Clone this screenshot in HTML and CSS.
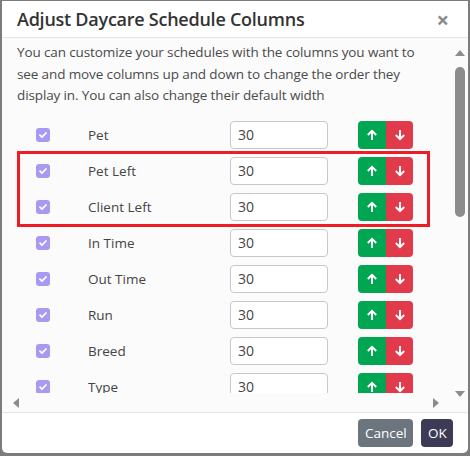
FILE: index.html
```html
<!DOCTYPE html>
<html lang="en">
<head>
    <meta charset="UTF-8">
    <meta name="viewport" content="width=device-width, initial-scale=1.0">
    <title>Adjust Daycare Schedule Columns</title>
    <link rel="stylesheet" href="styles.css">
</head>
<body>
    <div class="modal">
        <div class="modal-header">
            <h1>Adjust Daycare Schedule Columns</h1>
            <span class="close">&times;</span>
        </div>

        <div class="modal-body">
            <div class="scroll-area">
                <p class="intro">You can customize your schedules with the columns you want to see and move columns up and down to change the order they display in. You can also change their default width</p>

                <div class="col-list">
                    <div class="col-row">
                        <span class="check"><svg width="14" height="14" viewBox="0 0 14 14"><path d="M4 7.2l2 2 4-4.2" fill="none" stroke="#fff" stroke-width="1.8" stroke-linecap="round" stroke-linejoin="round"/></svg></span>
                        <span class="col-name">Pet</span>
                        <input type="text" class="col-width" value="30">
                        <div class="move-group">
                            <button class="move-up"><svg width="12" height="12" viewBox="0 0 12 12"><path d="M6 11V1.8M1.8 6L6 1.8 10.2 6" fill="none" stroke="#fff" stroke-width="2"/></svg></button>
                            <button class="move-down"><svg width="12" height="12" viewBox="0 0 12 12"><path d="M6 1v9.2M1.8 6L6 10.2 10.2 6" fill="none" stroke="#fff" stroke-width="2"/></svg></button>
                        </div>
                    </div>

                    <div class="highlight">
                        <div class="col-row">
                            <span class="check"><svg width="14" height="14" viewBox="0 0 14 14"><path d="M4 7.2l2 2 4-4.2" fill="none" stroke="#fff" stroke-width="1.8" stroke-linecap="round" stroke-linejoin="round"/></svg></span>
                            <span class="col-name">Pet Left</span>
                            <input type="text" class="col-width" value="30">
                            <div class="move-group">
                                <button class="move-up"><svg width="12" height="12" viewBox="0 0 12 12"><path d="M6 11V1.8M1.8 6L6 1.8 10.2 6" fill="none" stroke="#fff" stroke-width="2"/></svg></button>
                                <button class="move-down"><svg width="12" height="12" viewBox="0 0 12 12"><path d="M6 1v9.2M1.8 6L6 10.2 10.2 6" fill="none" stroke="#fff" stroke-width="2"/></svg></button>
                            </div>
                        </div>
                        <div class="col-row">
                            <span class="check"><svg width="14" height="14" viewBox="0 0 14 14"><path d="M4 7.2l2 2 4-4.2" fill="none" stroke="#fff" stroke-width="1.8" stroke-linecap="round" stroke-linejoin="round"/></svg></span>
                            <span class="col-name">Client Left</span>
                            <input type="text" class="col-width" value="30">
                            <div class="move-group">
                                <button class="move-up"><svg width="12" height="12" viewBox="0 0 12 12"><path d="M6 11V1.8M1.8 6L6 1.8 10.2 6" fill="none" stroke="#fff" stroke-width="2"/></svg></button>
                                <button class="move-down"><svg width="12" height="12" viewBox="0 0 12 12"><path d="M6 1v9.2M1.8 6L6 10.2 10.2 6" fill="none" stroke="#fff" stroke-width="2"/></svg></button>
                            </div>
                        </div>
                    </div>

                    <div class="col-row">
                        <span class="check"><svg width="14" height="14" viewBox="0 0 14 14"><path d="M4 7.2l2 2 4-4.2" fill="none" stroke="#fff" stroke-width="1.8" stroke-linecap="round" stroke-linejoin="round"/></svg></span>
                        <span class="col-name">In Time</span>
                        <input type="text" class="col-width" value="30">
                        <div class="move-group">
                            <button class="move-up"><svg width="12" height="12" viewBox="0 0 12 12"><path d="M6 11V1.8M1.8 6L6 1.8 10.2 6" fill="none" stroke="#fff" stroke-width="2"/></svg></button>
                            <button class="move-down"><svg width="12" height="12" viewBox="0 0 12 12"><path d="M6 1v9.2M1.8 6L6 10.2 10.2 6" fill="none" stroke="#fff" stroke-width="2"/></svg></button>
                        </div>
                    </div>
                    <div class="col-row">
                        <span class="check"><svg width="14" height="14" viewBox="0 0 14 14"><path d="M4 7.2l2 2 4-4.2" fill="none" stroke="#fff" stroke-width="1.8" stroke-linecap="round" stroke-linejoin="round"/></svg></span>
                        <span class="col-name">Out Time</span>
                        <input type="text" class="col-width" value="30">
                        <div class="move-group">
                            <button class="move-up"><svg width="12" height="12" viewBox="0 0 12 12"><path d="M6 11V1.8M1.8 6L6 1.8 10.2 6" fill="none" stroke="#fff" stroke-width="2"/></svg></button>
                            <button class="move-down"><svg width="12" height="12" viewBox="0 0 12 12"><path d="M6 1v9.2M1.8 6L6 10.2 10.2 6" fill="none" stroke="#fff" stroke-width="2"/></svg></button>
                        </div>
                    </div>
                    <div class="col-row">
                        <span class="check"><svg width="14" height="14" viewBox="0 0 14 14"><path d="M4 7.2l2 2 4-4.2" fill="none" stroke="#fff" stroke-width="1.8" stroke-linecap="round" stroke-linejoin="round"/></svg></span>
                        <span class="col-name">Run</span>
                        <input type="text" class="col-width" value="30">
                        <div class="move-group">
                            <button class="move-up"><svg width="12" height="12" viewBox="0 0 12 12"><path d="M6 11V1.8M1.8 6L6 1.8 10.2 6" fill="none" stroke="#fff" stroke-width="2"/></svg></button>
                            <button class="move-down"><svg width="12" height="12" viewBox="0 0 12 12"><path d="M6 1v9.2M1.8 6L6 10.2 10.2 6" fill="none" stroke="#fff" stroke-width="2"/></svg></button>
                        </div>
                    </div>
                    <div class="col-row">
                        <span class="check"><svg width="14" height="14" viewBox="0 0 14 14"><path d="M4 7.2l2 2 4-4.2" fill="none" stroke="#fff" stroke-width="1.8" stroke-linecap="round" stroke-linejoin="round"/></svg></span>
                        <span class="col-name">Breed</span>
                        <input type="text" class="col-width" value="30">
                        <div class="move-group">
                            <button class="move-up"><svg width="12" height="12" viewBox="0 0 12 12"><path d="M6 11V1.8M1.8 6L6 1.8 10.2 6" fill="none" stroke="#fff" stroke-width="2"/></svg></button>
                            <button class="move-down"><svg width="12" height="12" viewBox="0 0 12 12"><path d="M6 1v9.2M1.8 6L6 10.2 10.2 6" fill="none" stroke="#fff" stroke-width="2"/></svg></button>
                        </div>
                    </div>
                    <div class="col-row">
                        <span class="check"><svg width="14" height="14" viewBox="0 0 14 14"><path d="M4 7.2l2 2 4-4.2" fill="none" stroke="#fff" stroke-width="1.8" stroke-linecap="round" stroke-linejoin="round"/></svg></span>
                        <span class="col-name">Type</span>
                        <input type="text" class="col-width" value="30">
                        <div class="move-group">
                            <button class="move-up"><svg width="12" height="12" viewBox="0 0 12 12"><path d="M6 11V1.8M1.8 6L6 1.8 10.2 6" fill="none" stroke="#fff" stroke-width="2"/></svg></button>
                            <button class="move-down"><svg width="12" height="12" viewBox="0 0 12 12"><path d="M6 1v9.2M1.8 6L6 10.2 10.2 6" fill="none" stroke="#fff" stroke-width="2"/></svg></button>
                        </div>
                    </div>
                </div>
            </div>

            <div class="vscroll">
                <span class="arrow-up"></span>
                <div class="vtrack"><span class="vthumb"></span></div>
                <span class="arrow-down"></span>
            </div>
            <div class="hscroll">
                <span class="arrow-left"></span>
                <span class="arrow-right"></span>
            </div>
        </div>

        <div class="modal-footer">
            <button class="btn btn-cancel">Cancel</button>
            <button class="btn btn-ok">OK</button>
        </div>
    </div>
</body>
</html>
```

FILE: styles.css
```css
body {
    background-color: #7c7c7c;
    margin: 0;
    padding: 1px 2px 0 2px;
    font-family: 'Open Sans', 'Noto Sans', Arial, sans-serif;
    color: #444;
}
.modal {
    background: #fff;
    border-radius: 0 0 5px 5px;
    height: 452px;
    display: flex;
    flex-direction: column;
    overflow: hidden;
}
.modal-header {
    height: 36px;
    padding: 0 15px;
    display: flex;
    align-items: center;
    justify-content: space-between;
    border-bottom: 1px solid #e5e5e5;
    flex-shrink: 0;
}
h1 {
    margin: 0;
    font-size: 18px;
    font-weight: 600;
    letter-spacing: -0.25px;
    color: #333;
}
.close {
    font-size: 22px;
    font-weight: 700;
    color: #8a8a8a;
    line-height: 1;
    margin-right: 4px;
}
.modal-body {
    display: grid;
    grid-template-columns: 1fr 16px;
    grid-template-rows: 355px 19px;
    background: #fbfbfb;
    border-bottom: 1px solid #e5e5e5;
}
.scroll-area {
    overflow: hidden;
    padding: 4px 0 0 15px;
}
.intro {
    margin: 0 0 14px 0;
    font-size: 13.5px;
    line-height: 21.5px;
    letter-spacing: -0.12px;
    color: #4a4a4a;
    width: 410px;
}
.col-list {
    display: flex;
    flex-direction: column;
    gap: 8px;
}
.col-row {
    display: flex;
    align-items: center;
    height: 28px;
    padding-left: 19px;
    flex-shrink: 0;
}
.highlight {
    margin: -6px 0;
    padding: 3px 0;
    width: 407px;
    border: 3px solid #ee1c25;
    display: flex;
    flex-direction: column;
    gap: 8px;
}
.highlight .col-row {
    padding-left: 16px;
}
.check {
    width: 14px;
    height: 14px;
    border-radius: 3px;
    background: #a89af3;
    display: flex;
    flex-shrink: 0;
}
.col-name {
    margin-left: 38px;
    width: 142px;
    font-size: 13.5px;
    color: #444;
    flex-shrink: 0;
}
.col-width {
    width: 98px;
    height: 28px;
    box-sizing: border-box;
    border: 1px solid #c8c8c8;
    border-radius: 4px;
    padding: 0 7px;
    font-family: inherit;
    font-size: 14px;
    color: #444;
    background: #fff;
    outline: none;
    flex-shrink: 0;
}
.move-group {
    display: flex;
    margin-left: 30px;
    border-radius: 4px;
    overflow: hidden;
    flex-shrink: 0;
}
.move-group button {
    width: 28px;
    height: 28px;
    border: none;
    padding: 0;
    display: flex;
    align-items: center;
    justify-content: center;
    cursor: pointer;
}
.move-up {
    background: #00a651;
}
.move-down {
    background: #e03a4b;
    width: 27px !important;
}
.vscroll {
    grid-row: 1 / 3;
    grid-column: 2;
    display: flex;
    flex-direction: column;
    align-items: center;
    padding: 12px 0 0 0;
}
.arrow-up, .arrow-down {
    width: 0;
    height: 0;
    border-left: 5px solid transparent;
    border-right: 5px solid transparent;
}
.arrow-up {
    border-bottom: 6px solid #8c8c8c;
}
.arrow-down {
    border-top: 6px solid #8c8c8c;
}
.vtrack {
    height: 324px;
    width: 10px;
    padding-top: 11px;
}
.vthumb {
    display: block;
    width: 10px;
    height: 150px;
    border-radius: 5px;
    background: #8c8c8c;
}
.hscroll {
    display: flex;
    align-items: center;
    justify-content: space-between;
    padding: 0 13px 0 11px;
}
.arrow-left, .arrow-right {
    width: 0;
    height: 0;
    border-top: 5px solid transparent;
    border-bottom: 5px solid transparent;
}
.arrow-left {
    border-right: 6px solid #8c8c8c;
}
.arrow-right {
    border-left: 6px solid #8c8c8c;
}
.modal-footer {
    flex: 1;
    display: flex;
    justify-content: flex-end;
    align-items: center;
    gap: 8px;
    padding: 0 15px;
}
.btn {
    height: 28px;
    border: none;
    border-radius: 4px;
    color: #fff;
    font-family: inherit;
    font-size: 13.5px;
    padding: 0 7px;
    cursor: pointer;
}
.btn-cancel {
    background: #6c757d;
    width: 55px;
}
.btn-ok {
    background: #3d3a56;
    width: 32px;
}
```
